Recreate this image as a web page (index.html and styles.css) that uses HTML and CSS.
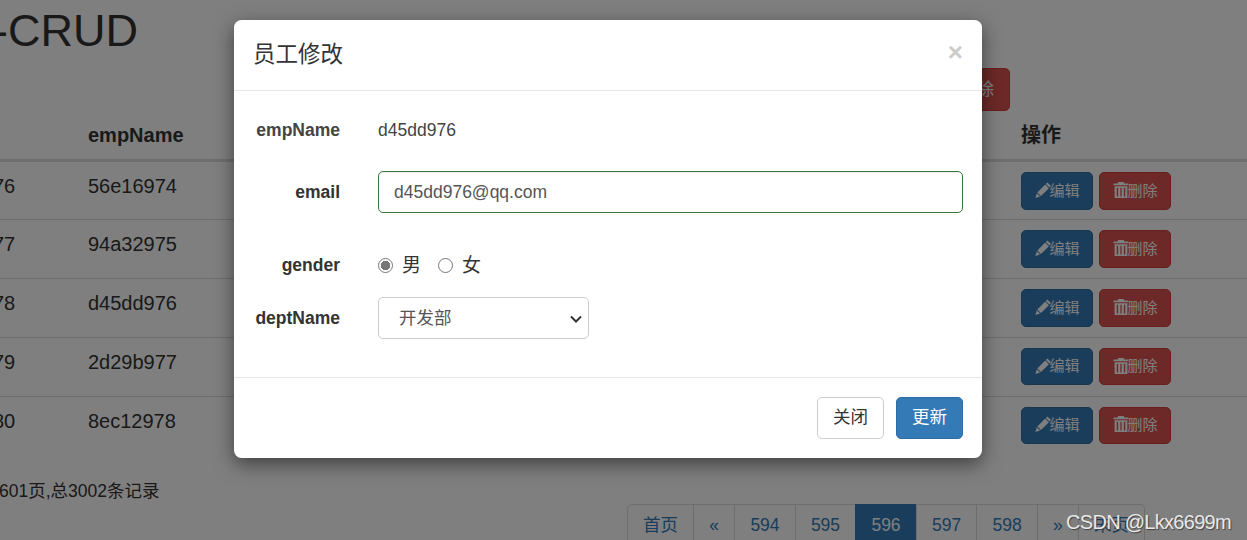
FILE: index.html
```html
<!DOCTYPE html>
<html lang="zh-CN">
<head>
    <meta charset="UTF-8">
    <meta name="viewport" content="width=device-width, initial-scale=1.0">
    <title>员工修改</title>
    <link rel="stylesheet" href="styles.css">
</head>
<body>
    <div class="page">
        <h1 class="pageTitle">-CRUD</h1>
        <div class="toolbar">
            <button type="button" class="btn btnDanger btnTool">删除</button>
        </div>

        <div class="empTable">
            <div class="empRow empHead">
                <div class="cellId"></div>
                <div class="cellName">empName</div>
                <div class="cellOps">操作</div>
            </div>
            <div class="empRow">
                <div class="cellId">76</div>
                <div class="cellName">56e16974</div>
                <div class="cellOps">
                    <button type="button" class="btn btnSm btnPrimary"><svg class="icon" viewBox="0 0 15 15"><path d="M11.600.4 15 3.800 13.600 5.200 10.200 1.800zM9.600 2.400 13 5.800 5.600 13.200 2.200 9.800zM1.700 10.600 4.800 13.700.3 15z"/></svg>编辑</button>
                    <button type="button" class="btn btnSm btnDanger"><svg class="icon" viewBox="0 0 15 15"><path d="M5 0h5l.6 1.500H14.500V3H.5V1.500H4.400zM1.500 3.900h12V15h-12zM3.500 5.500V13.500H4.800V5.500zM6.900 5.500V13.500H8.100V5.500zM10.200 5.500V13.500H11.500V5.500z" fill-rule="evenodd"/></svg>删除</button>
                </div>
            </div>
            <div class="empRow">
                <div class="cellId">77</div>
                <div class="cellName">94a32975</div>
                <div class="cellOps">
                    <button type="button" class="btn btnSm btnPrimary"><svg class="icon" viewBox="0 0 15 15"><path d="M11.600.4 15 3.800 13.600 5.200 10.200 1.800zM9.600 2.400 13 5.800 5.600 13.200 2.200 9.800zM1.700 10.600 4.800 13.700.3 15z"/></svg>编辑</button>
                    <button type="button" class="btn btnSm btnDanger"><svg class="icon" viewBox="0 0 15 15"><path d="M5 0h5l.6 1.500H14.500V3H.5V1.500H4.400zM1.500 3.900h12V15h-12zM3.500 5.500V13.500H4.800V5.500zM6.900 5.500V13.500H8.100V5.500zM10.200 5.500V13.500H11.500V5.500z" fill-rule="evenodd"/></svg>删除</button>
                </div>
            </div>
            <div class="empRow">
                <div class="cellId">78</div>
                <div class="cellName">d45dd976</div>
                <div class="cellOps">
                    <button type="button" class="btn btnSm btnPrimary"><svg class="icon" viewBox="0 0 15 15"><path d="M11.600.4 15 3.800 13.600 5.200 10.200 1.800zM9.600 2.400 13 5.800 5.600 13.200 2.200 9.800zM1.700 10.600 4.800 13.700.3 15z"/></svg>编辑</button>
                    <button type="button" class="btn btnSm btnDanger"><svg class="icon" viewBox="0 0 15 15"><path d="M5 0h5l.6 1.500H14.500V3H.5V1.500H4.400zM1.500 3.900h12V15h-12zM3.500 5.500V13.500H4.800V5.500zM6.900 5.500V13.500H8.100V5.500zM10.200 5.500V13.500H11.500V5.500z" fill-rule="evenodd"/></svg>删除</button>
                </div>
            </div>
            <div class="empRow">
                <div class="cellId">79</div>
                <div class="cellName">2d29b977</div>
                <div class="cellOps">
                    <button type="button" class="btn btnSm btnPrimary"><svg class="icon" viewBox="0 0 15 15"><path d="M11.600.4 15 3.800 13.600 5.200 10.200 1.800zM9.600 2.400 13 5.800 5.600 13.200 2.200 9.800zM1.700 10.600 4.800 13.700.3 15z"/></svg>编辑</button>
                    <button type="button" class="btn btnSm btnDanger"><svg class="icon" viewBox="0 0 15 15"><path d="M5 0h5l.6 1.500H14.500V3H.5V1.500H4.400zM1.500 3.900h12V15h-12zM3.500 5.500V13.500H4.800V5.500zM6.900 5.500V13.500H8.100V5.500zM10.200 5.500V13.500H11.500V5.500z" fill-rule="evenodd"/></svg>删除</button>
                </div>
            </div>
            <div class="empRow">
                <div class="cellId">80</div>
                <div class="cellName">8ec12978</div>
                <div class="cellOps">
                    <button type="button" class="btn btnSm btnPrimary"><svg class="icon" viewBox="0 0 15 15"><path d="M11.600.4 15 3.800 13.600 5.200 10.200 1.800zM9.600 2.400 13 5.800 5.600 13.200 2.200 9.800zM1.700 10.600 4.800 13.700.3 15z"/></svg>编辑</button>
                    <button type="button" class="btn btnSm btnDanger"><svg class="icon" viewBox="0 0 15 15"><path d="M5 0h5l.6 1.500H14.500V3H.5V1.500H4.400zM1.500 3.900h12V15h-12zM3.500 5.500V13.500H4.800V5.500zM6.900 5.500V13.500H8.100V5.500zM10.200 5.500V13.500H11.500V5.500z" fill-rule="evenodd"/></svg>删除</button>
                </div>
            </div>
        </div>

        <div class="pageInfo">601页,总3002条记录</div>
        <ul class="pagination">
            <li><a href="#">首页</a></li>
            <li><a href="#">«</a></li>
            <li><a href="#">594</a></li>
            <li><a href="#">595</a></li>
            <li class="active"><a href="#">596</a></li>
            <li><a href="#">597</a></li>
            <li><a href="#">598</a></li>
            <li><a href="#">»</a></li>
            <li><a href="#">末页</a></li>
        </ul>
    </div>

    <div class="backdrop">
        <div class="modal">
            <div class="modalHeader">
                <h4 class="modalTitle">员工修改</h4>
                <button type="button" class="close">×</button>
            </div>
            <form class="modalBody">
                <div class="formRow rowStatic">
                    <label>empName</label>
                    <span>d45dd976</span>
                </div>
                <div class="formRow rowEmail">
                    <label for="emailInput">email</label>
                    <input type="text" id="emailInput" class="formControl" value="d45dd976@qq.com">
                </div>
                <div class="formRow rowGender">
                    <label>gender</label>
                    <div class="radios">
                        <label class="radioLabel"><input type="radio" name="gender" checked>男</label>
                        <label class="radioLabel"><input type="radio" name="gender">女</label>
                    </div>
                </div>
                <div class="formRow">
                    <label for="deptSelect">deptName</label>
                    <select id="deptSelect" class="formControl deptSelect">
                        <option>开发部</option>
                    </select>
                </div>
            </form>
            <div class="modalFooter">
                <button type="button" class="btn btnDefault">关闭</button>
                <button type="button" class="btn btnPrimary">更新</button>
            </div>
        </div>
    </div>

    <div class="watermark">CSDN @Lkx6699m</div>
</body>
</html>
```

FILE: styles.css
```css
* {
    box-sizing: border-box;
}

html, body {
    margin: 0;
    height: 540px;
    overflow: hidden;
}

body {
    position: relative;
    font-family: "Liberation Sans", Arial, "Noto Sans CJK SC", sans-serif;
    font-size: 17.5px;
    line-height: 25px;
    color: #333;
    background-color: #fff;
}

.page {
    width: 1254px;
    margin-left: -7px;
}

.pageTitle {
    margin: 6px 0 12.5px;
    font-size: 45px;
    font-weight: 500;
    line-height: 49.5px;
}

.toolbar {
    display: flex;
    justify-content: flex-end;
    padding-right: 237px;
}

.btn {
    padding: 7.500px 15px;
    font-family: inherit;
    font-size: 17.5px;
    line-height: 25px;
    border: 1px solid transparent;
    border-radius: 5px;
    white-space: nowrap;
}

.btnTool {
    height: 43px;
}

.btnSm {
    display: flex;
    align-items: center;
    height: 37.500px;
    padding: 0 12.5px;
    font-size: 15px;
    line-height: 22.5px;
}

.btnPrimary {
    color: #fff;
    background-color: #337ab7;
    border-color: #2e6da4;
}

.btnDanger {
    color: #fff;
    background-color: #d9534f;
    border-color: #d43f3a;
}

.btnDefault {
    color: #333;
    background-color: #fff;
    border-color: #ccc;
}

.icon {
    flex: none;
    width: 16px;
    height: 16px;
    margin: -2px -1px 0 0;
    fill: currentColor;
}

/* employee table */
.empRow {
    display: flex;
    height: 58.75px;
    padding-top: 10px;
    border-top: 1px solid #ddd;
    font-size: 20px;
    line-height: 28.5px;
}

.empRow.empHead {
    height: 51px;
    border-top: none;
    border-bottom: 3px solid #ddd;
    font-weight: bold;
}

.empHead + .empRow {
    height: 57.4px;
    border-top: none;
}

.cellId {
    width: 95px;
}

.cellName {
    width: 933px;
}

.cellOps {
    display: flex;
    gap: 6px;
}

.pageInfo {
    margin-top: 25px;
    padding-left: 6px;
}

.pagination {
    display: flex;
    justify-content: flex-end;
    margin: 0;
    padding: 0 102px 0 0;
    list-style: none;
}

.pagination a {
    display: block;
    margin-left: -0.7px;
    padding: 7.500px 15px;
    color: #337ab7;
    text-decoration: none;
    background-color: #fff;
    border: 1px solid #ddd;
}

.pagination li:first-child a {
    border-radius: 5px 0 0 5px;
}

.pagination li:last-child a {
    border-radius: 0 5px 5px 0;
}

.pagination .active a {
    color: #fff;
    background-color: #337ab7;
    border-color: #337ab7;
}

/* modal over the page */
.backdrop {
    position: absolute;
    top: 0;
    left: 0;
    width: 100%;
    height: 100%;
    padding: 20px 31px 0 0;
    background-color: rgba(0, 0, 0, 0.5);
}

.modal {
    width: 748px;
    margin: 0 auto;
    background-color: #fff;
    border-radius: 7.500px;
    box-shadow: 0 6px 19px rgba(0, 0, 0, 0.5);
}

.modalHeader {
    display: flex;
    justify-content: space-between;
    height: 71px;
    padding: 18.75px 19px;
    border-bottom: 1px solid #e5e5e5;
}

.modalTitle {
    margin: 0;
    font-size: 22.5px;
    font-weight: 400;
    line-height: 32px;
}

.close {
    height: 26px;
    padding: 0;
    font-family: inherit;
    font-size: 26px;
    font-weight: bold;
    line-height: 12px;
    color: #ccc;
    background: none;
    border: none;
}

.modalBody {
    padding: 19px 19px 0;
}

.formRow {
    display: grid;
    grid-template-columns: 87px 1fr;
    column-gap: 38px;
    align-items: center;
    margin-bottom: 37.5px;
}

.formRow > label {
    font-weight: bold;
    text-align: right;
    white-space: nowrap;
}

.rowStatic {
    height: 42.5px;
    padding-bottom: 2px;
    margin-bottom: 18.75px;
    color: #444;
}

.rowEmail {
    margin-bottom: 35.5px;
}

.rowGender {
    height: 34px;
    margin-bottom: 14px;
}

.formControl {
    width: 100%;
    height: 42.5px;
    padding: 7.500px 15px;
    font-family: inherit;
    font-size: 17.5px;
    color: #555;
    background-color: #fff;
    border: 1px solid #ccc;
    border-radius: 5px;
}

#emailInput {
    height: 42px;
    border-color: #3c763d;
    box-shadow: inset 0 1px 1px rgba(0, 0, 0, 0.075);
}

.deptSelect {
    width: 211px;
    padding-left: 20px;
    appearance: none;
    background: #fff url("data:image/svg+xml,%3Csvg xmlns='http://www.w3.org/2000/svg' width='12' height='8'%3E%3Cpath d='M1 1.500 6 6.500 11 1.500' fill='none' stroke='%23333' stroke-width='2'/%3E%3C/svg%3E") no-repeat 191px 17px;
}

.radios {
    display: flex;
    gap: 17px;
    font-size: 19px;
}

.radioLabel {
    display: flex;
    align-items: center;
    gap: 9px;
}

.radioLabel input {
    appearance: none;
    width: 15px;
    height: 15px;
    margin: 0;
    border: 1px solid #767676;
    border-radius: 50%;
    background-color: #fff;
}

.radioLabel input:checked {
    background: radial-gradient(circle, #767676 0 4.500px, #fff 5px);
}

.modalFooter {
    display: flex;
    justify-content: flex-end;
    gap: 12px;
    padding: 19px;
    border-top: 1px solid #e5e5e5;
}

.watermark {
    position: absolute;
    top: 509px;
    left: 1066px;
    font-size: 20px;
    line-height: 26px;
    letter-spacing: -0.7px;
    color: #e8e8e8;
    text-shadow: 1px 1px 1px #444;
    white-space: nowrap;
}
```
